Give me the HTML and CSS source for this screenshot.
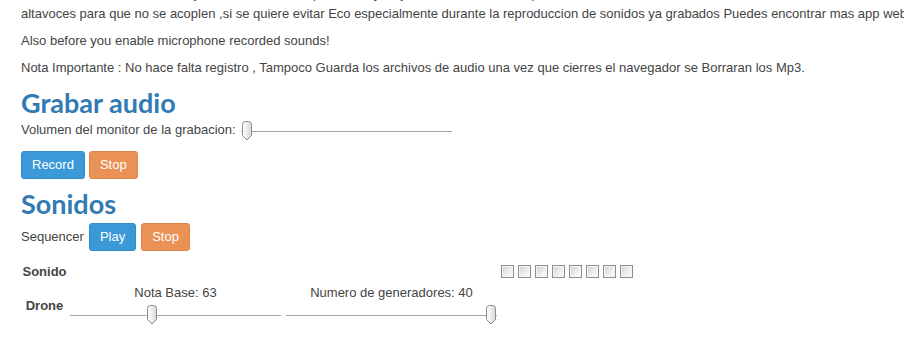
FILE: index.html
```html
<!DOCTYPE html>
<html lang="es">
<head>
<meta charset="utf-8">
<title>Grabar audio</title>
<link rel="stylesheet" href="styles.css">
</head>
<body>
<div class="page">
  <p class="intro"><span class="line">Por favor usa auriculares o baja el volumen de los parlantes, y aleja el microfono lo mas posible de tus</span><span class="line">altavoces para que no se acoplen ,si se quiere evitar Eco especialmente durante la reproduccion de sonidos ya grabados Puedes encontrar mas app web en nuestra pagina</span></p>
  <p class="para">Also before you enable microphone recorded sounds!</p>
  <p class="para">Nota Importante : No hace falta registro , Tampoco Guarda los archivos de audio una vez que cierres el navegador se Borraran los Mp3.</p>

  <h2 class="title">Grabar audio</h2>
  <div class="vol-row">
    <span>Volumen del monitor de la grabacion:</span>
    <div class="slider">
      <div class="track"></div>
      <svg class="thumb" style="left:0px" width="12" height="20" viewBox="0 0 12 20"><defs><linearGradient id="tg1" x1="0" y1="0" x2="1" y2="0"><stop offset="0" stop-color="#ffffff"/><stop offset="1" stop-color="#d9d9d9"/></linearGradient></defs><path d="M1.5 3.5 Q1.5 0.5 4.5 0.5 L7.5 0.5 Q10.5 0.5 10.5 3.5 L10.5 14.5 L6 19 L1.5 14.5 Z" fill="url(#tg1)" stroke="#8a8a8a" stroke-width="1"/></svg>
    </div>
  </div>
  <div class="btn-row">
    <button class="btn btn-blue">Record</button>
    <button class="btn btn-orange">Stop</button>
  </div>

  <h2 class="title title-2">Sonidos</h2>
  <div class="seq-row">
    <span>Sequencer</span>
    <button class="btn btn-blue">Play</button>
    <button class="btn btn-orange">Stop</button>
  </div>

  <div class="grid">
    <div class="lbl lbl-sonido">Sonido</div>
    <div></div>
    <div></div>
    <div class="checks">
      <span class="cb"></span><span class="cb"></span><span class="cb"></span><span class="cb"></span><span class="cb"></span><span class="cb"></span><span class="cb"></span><span class="cb"></span>
    </div>

    <div class="lbl lbl-drone">Drone</div>
    <div class="cell">
      <div class="cell-label">Nota Base: 63</div>
      <div class="slider">
        <div class="track"></div>
        <svg class="thumb" style="left:76px" width="12" height="20" viewBox="0 0 12 20"><defs><linearGradient id="tg2" x1="0" y1="0" x2="1" y2="0"><stop offset="0" stop-color="#ffffff"/><stop offset="1" stop-color="#d9d9d9"/></linearGradient></defs><path d="M1.5 3.5 Q1.5 0.5 4.5 0.5 L7.5 0.5 Q10.5 0.5 10.5 3.5 L10.5 14.5 L6 19 L1.5 14.5 Z" fill="url(#tg2)" stroke="#8a8a8a" stroke-width="1"/></svg>
      </div>
    </div>
    <div class="cell">
      <div class="cell-label">Numero de generadores: 40</div>
      <div class="slider">
        <div class="track"></div>
        <svg class="thumb" style="left:199px" width="12" height="20" viewBox="0 0 12 20"><defs><linearGradient id="tg3" x1="0" y1="0" x2="1" y2="0"><stop offset="0" stop-color="#ffffff"/><stop offset="1" stop-color="#d9d9d9"/></linearGradient></defs><path d="M1.5 3.5 Q1.5 0.5 4.5 0.5 L7.5 0.5 Q10.5 0.5 10.5 3.5 L10.5 14.5 L6 19 L1.5 14.5 Z" fill="url(#tg3)" stroke="#8a8a8a" stroke-width="1"/></svg>
      </div>
    </div>
    <div></div>
  </div>
</div>
</body>
</html>
```

FILE: styles.css
```css
html, body {
  margin: 0;
  padding: 0;
  background: #ffffff;
}
body {
  width: 904px;
  height: 342px;
  overflow: hidden;
  font-family: "Liberation Sans", Arial, sans-serif;
  font-size: 13px;
  line-height: 20px;
  color: #444444;
}
.page {
  padding-left: 21px;
}
.intro {
  margin: -16px 0 7px 0;
}
.line {
  display: block;
  white-space: nowrap;
}
.para {
  margin: 0 0 7px 0;
  white-space: nowrap;
}
.title {
  font-family: Lato, "Open Sans", "Liberation Sans", sans-serif;
  font-weight: 700;
  font-size: 27px;
  line-height: 30px;
  color: #317ab3;
  margin: 10px 0 2px 0;
}
.title-2 {
  margin: 10px 0 4px 0;
}
.vol-row {
  display: flex;
  align-items: flex-start;
  gap: 5px;
}
.slider {
  position: relative;
  width: 211px;
  height: 22px;
}
.track {
  position: absolute;
  left: 0;
  right: 0;
  top: 11px;
  height: 1px;
  background: #a3a3a3;
}
.thumb {
  position: absolute;
  top: 1px;
}
.btn-row {
  display: flex;
  gap: 4px;
  margin-top: 9px;
}
.btn {
  font-family: "Liberation Sans", Arial, sans-serif;
  font-size: 13px;
  line-height: 20px;
  color: #ffffff;
  padding: 3px 10px;
  border: 1px solid transparent;
  border-radius: 3px;
  height: 28px;
  cursor: pointer;
}
.btn-blue {
  background: #3b99d8;
  border-color: #2f8bc9;
}
.btn-orange {
  background: #ea9155;
  border-color: #df844a;
}
.seq-row {
  display: flex;
  align-items: center;
  gap: 5px;
}
.grid {
  display: grid;
  grid-template-columns: 49px 216px 215px auto;
  grid-template-rows: 21px auto;
  margin-top: 10px;
}
.lbl {
  font-weight: 700;
  font-size: 13px;
  text-align: center;
  color: #444444;
  padding-right: 2px;
}
.lbl-sonido {
  line-height: 21px;
}
.lbl-drone {
  align-self: center;
  line-height: 20px;
  padding-top: 4px;
}
.checks {
  display: flex;
  gap: 4px;
  align-items: center;
}
.cb {
  width: 11px;
  height: 11px;
  border: 1px solid #8e8e8e;
  box-shadow: inset 0 0 0 1px #f6f6f6;
  background: linear-gradient(135deg, #cfcfcf 0%, #f0f0f0 60%, #fdfdfd 100%);
}
.cell {
  width: 211px;
}
.cell-label {
  text-align: center;
  line-height: 22px;
}
```
